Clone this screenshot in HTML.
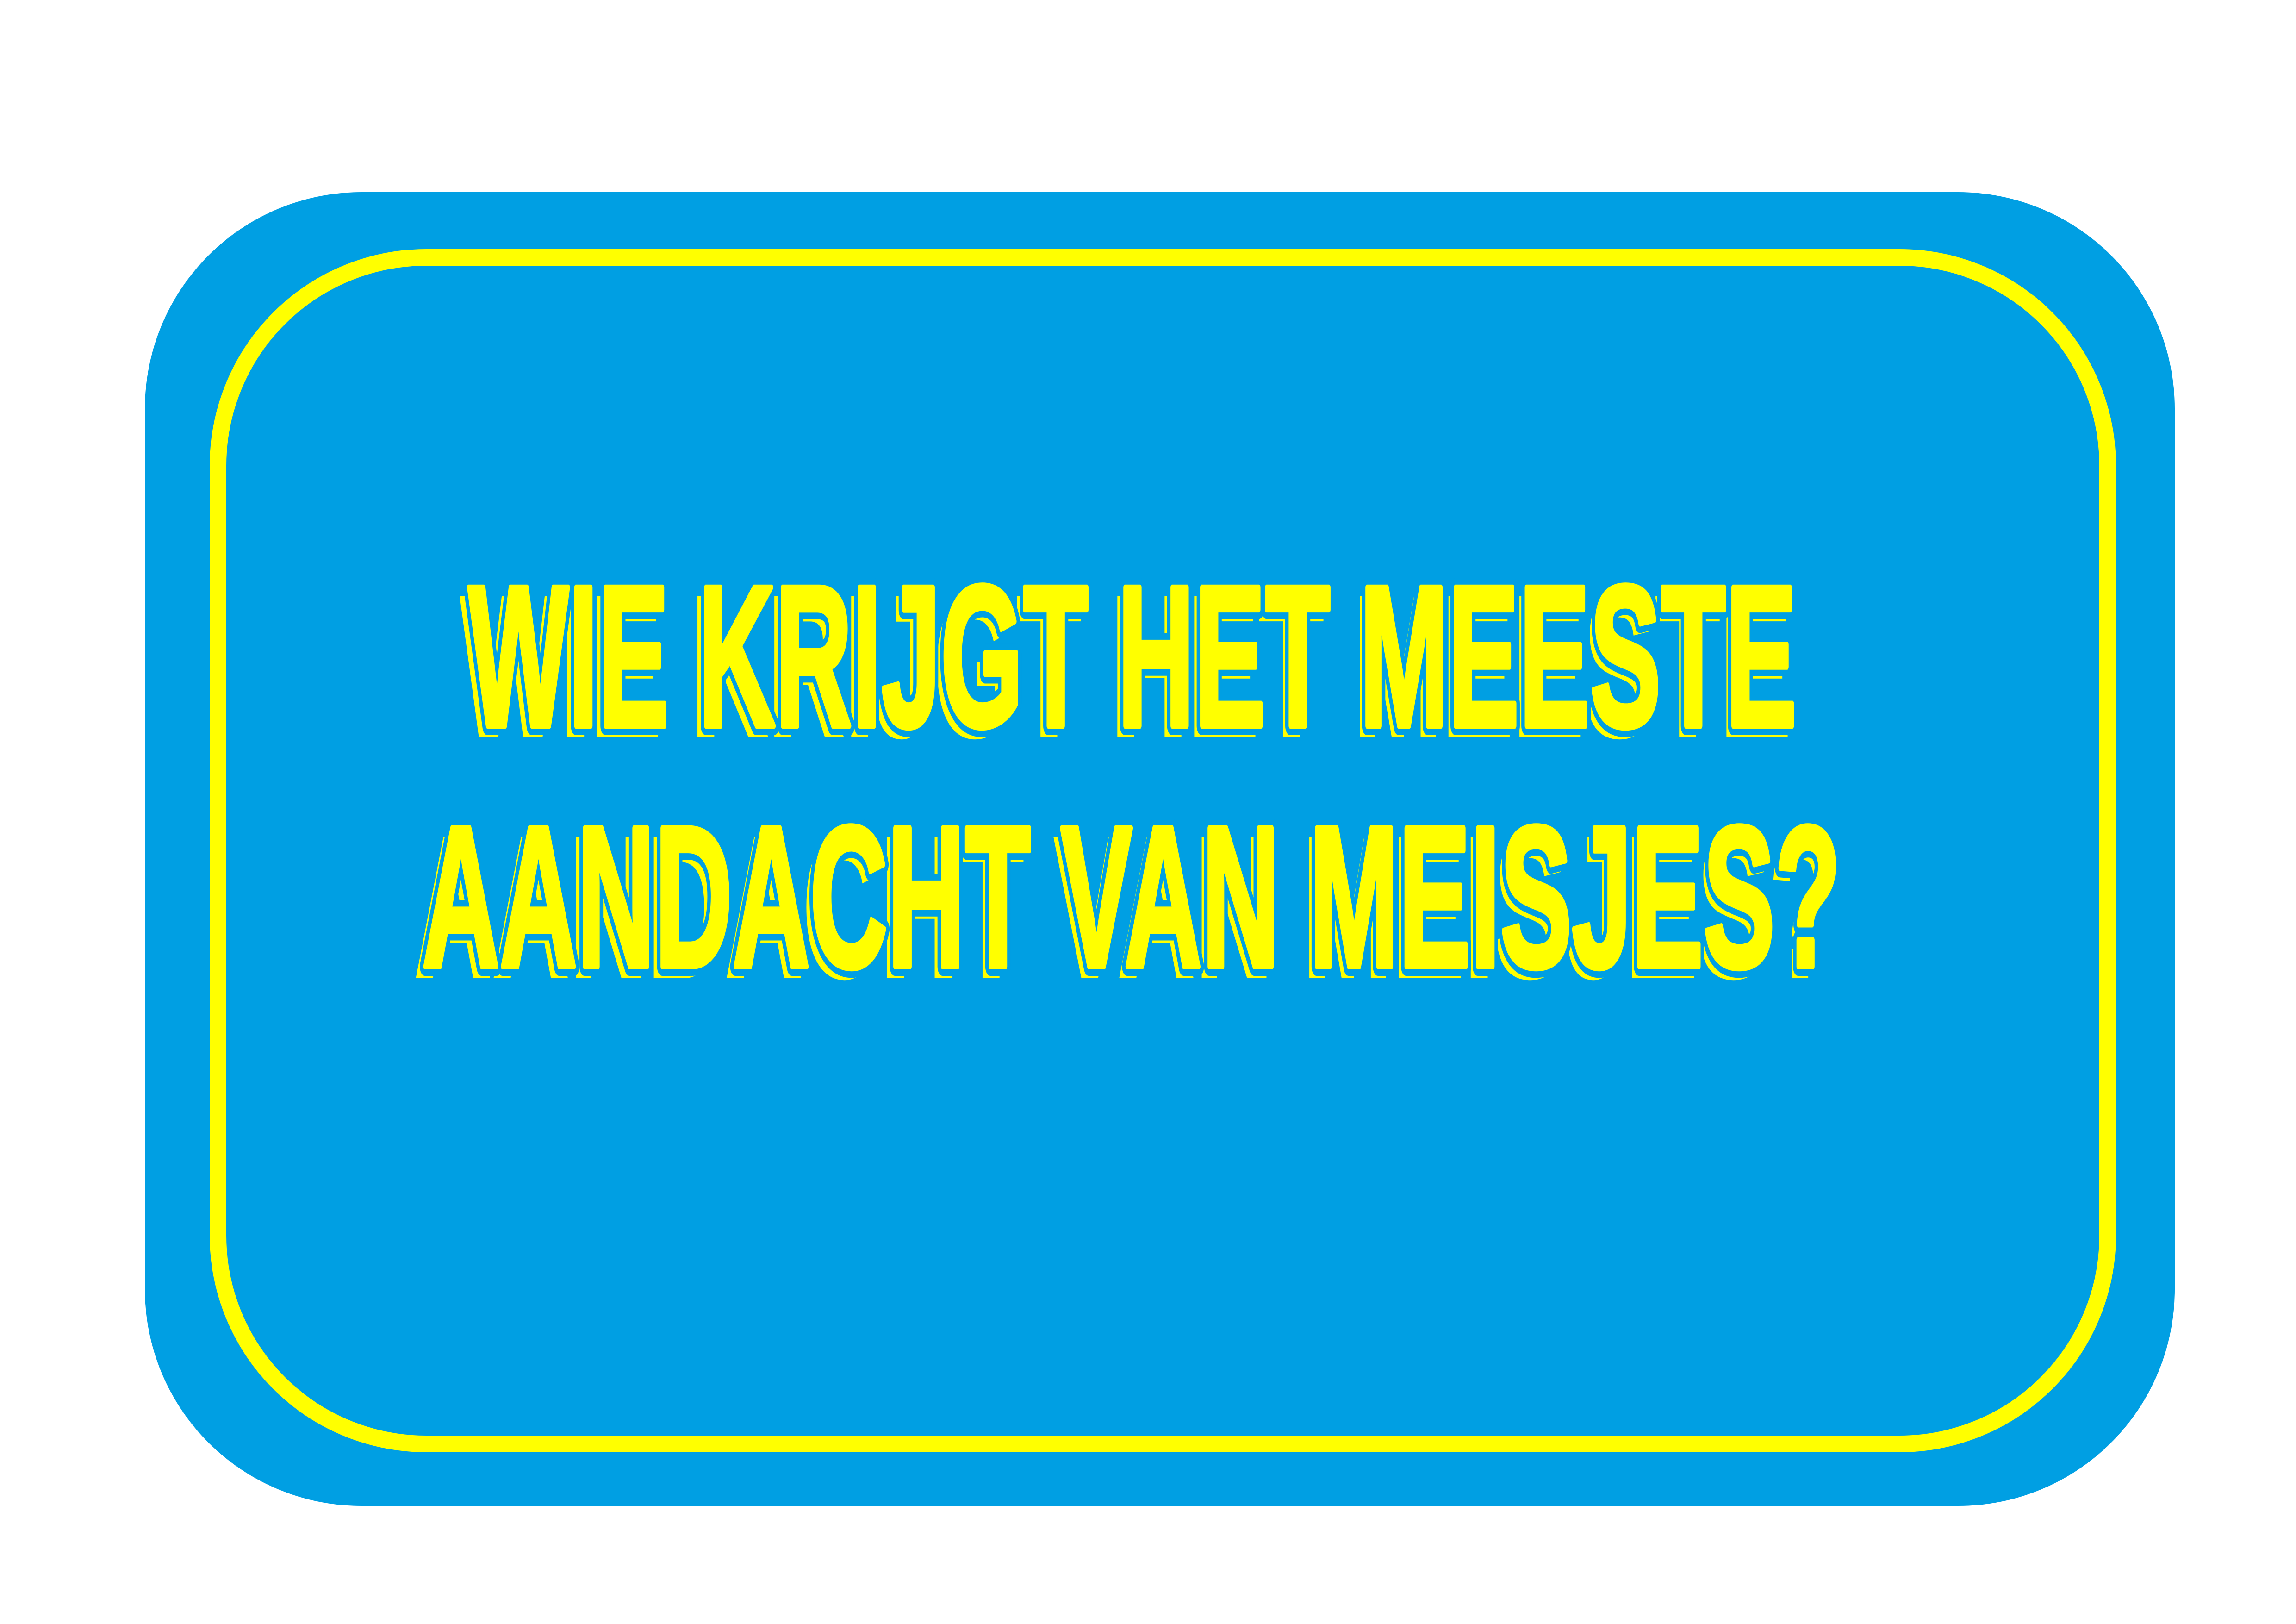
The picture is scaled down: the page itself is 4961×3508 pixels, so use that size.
<!DOCTYPE html>
<html><head><meta charset="utf-8"><style>html,body{margin:0;padding:0;background:#fff}svg{display:block}</style></head>
<body>
<svg width="4961" height="3508" viewBox="0 0 4961 3508" xmlns="http://www.w3.org/2000/svg">
<rect x="0" y="0" width="4961" height="3508" fill="#ffffff"/>
<rect x="313" y="415" width="4386" height="2838" rx="468" ry="468" fill="#009FE3"/>
<rect x="471" y="556" width="4083" height="2563" rx="450" ry="450" fill="none" stroke="#FFFF00" stroke-width="36"/>
<g font-family="Liberation Sans, sans-serif" font-weight="bold" font-size="435">
<text x="995" y="1590" textLength="2875" lengthAdjust="spacingAndGlyphs" fill="#FFFF00" stroke="#FFFF00" stroke-width="6">WIE KRIJGT HET MEESTE</text>
<text x="1012" y="1568" textLength="2870" lengthAdjust="spacingAndGlyphs" fill="#FFFF00" stroke="#009FE3" stroke-width="40" stroke-linejoin="round">WIE KRIJGT HET MEESTE</text>
<text x="1012" y="1568" textLength="2870" lengthAdjust="spacingAndGlyphs" fill="#FFFF00" stroke="#FFFF00" stroke-width="12" stroke-linejoin="round">WIE KRIJGT HET MEESTE</text>
<text x="895" y="2110" textLength="3070" lengthAdjust="spacingAndGlyphs" fill="#FFFF00" stroke="#FFFF00" stroke-width="6">AANDACHT VAN MEISJES?</text>
<text x="912" y="2088" textLength="3065" lengthAdjust="spacingAndGlyphs" fill="#FFFF00" stroke="#009FE3" stroke-width="40" stroke-linejoin="round">AANDACHT VAN MEISJES?</text>
<text x="912" y="2088" textLength="3065" lengthAdjust="spacingAndGlyphs" fill="#FFFF00" stroke="#FFFF00" stroke-width="12" stroke-linejoin="round">AANDACHT VAN MEISJES?</text>
</g>
</svg>
</body></html>
